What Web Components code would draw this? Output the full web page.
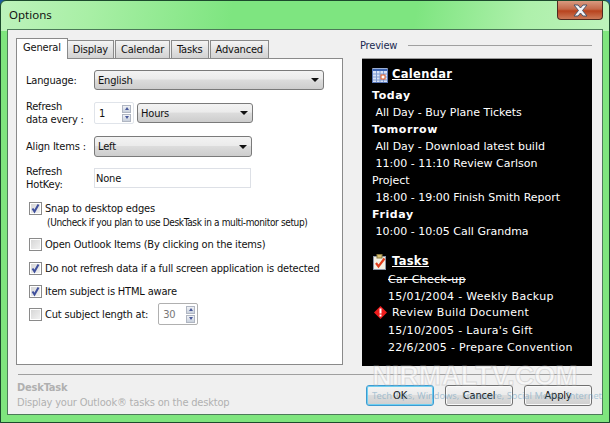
<!doctype html>
<html>
<head>
<title>Options</title>
<style>
html, body { margin: 0; height: 100%; background: #1d5a9c; overflow: hidden; }
body { font: 11px "DejaVu Sans", sans-serif; font-stretch: condensed; letter-spacing: -.18px; }
</style>
</head>
<body>
<options-dialog caption="Options">
  <tab-panel slot="left" tabs="General,Display,Calendar,Tasks,Advanced">
    <form-row label="Language:" style="--row-top:11px; --h:20px">
      <drop-down value="English" style="width:230px"></drop-down>
    </form-row>
    <form-row label="Refresh<br>data every :" style="--row-top:12px; --h:22px">
      <spin-box value="1"></spin-box>
      <drop-down value="Hours" style="width:116px"></drop-down>
    </form-row>
    <form-row label="Align Items :" style="--row-top:12px; --h:21px">
      <drop-down value="Left" style="width:158px;height:21px"></drop-down>
    </form-row>
    <form-row label="Refresh<br>HotKey:" style="--row-top:11px; --h:20px">
      <text-box value="None" style="width:157px"></text-box>
    </form-row>
    <check-box checked style="margin-top:13px">Snap to desktop edges</check-box>
    <div class="note">(Uncheck if you plan to use DeskTask in a multi-monitor setup)</div>
    <check-box style="margin-top:7px">Open Outlook Items (By clicking on the items)</check-box>
    <check-box checked style="margin-top:10px">Do not refresh data if a full screen application is detected</check-box>
    <check-box checked style="margin-top:9px">Item subject is HTML aware</check-box>
    <check-box style="margin-top:5px">Cut subject length at:<spin-box value="30" disabled style="margin-left:10px"></spin-box></check-box>
  </tab-panel>

  <preview-pane slot="right">
    <preview-head icon="calendar" style="margin-bottom:4px">Calendar</preview-head>
    <preview-day>Today</preview-day>
    <preview-item>All Day - Buy Plane Tickets</preview-item>
    <preview-day>Tomorrow</preview-day>
    <preview-item>All Day - Download latest build</preview-item>
    <preview-item>11:00 - 11:10 Review Carlson Project</preview-item>
    <preview-item>18:00 - 19:00 Finish Smith Report</preview-item>
    <preview-day>Friday</preview-day>
    <preview-item>10:00 - 10:05 Call Grandma</preview-item>
    <preview-head icon="tasks" style="margin:13px 0 1px">Tasks</preview-head>
    <preview-task done>Car Check-up</preview-task>
    <preview-task>15/01/2004 - Weekly Backup</preview-task>
    <preview-task urgent style="margin:-1px 0 1px">Review Build Document</preview-task>
    <preview-task>15/10/2005 - Laura's Gift</preview-task>
    <preview-task>22/6/2005 - Prepare Convention</preview-task>
  </preview-pane>

  <push-button slot="buttons" primary>OK</push-button>
  <push-button slot="buttons">Cancel</push-button>
  <push-button slot="buttons">Apply</push-button>
</options-dialog>

<script>
function shadow(el, html) {
  el.attachShadow({ mode: "open" }).innerHTML = html
}

class OptionsDialog extends HTMLElement {
  connectedCallback() {
    shadow(this, `
    <style>
    :host { display: flex; flex-direction: column; height: 423px; box-sizing: border-box; position: relative;
      border: 1px solid #1c4a2c; border-radius: 6px 6px 0 0; padding: 0 6px 7px 6px;
      background: linear-gradient(100deg, #bdf3bb 0, #a8efa5 15%, #7ee580 38%, #7ee580 68%, #aef0ab 86%, #bdf3bb 100%) top/100% 30px no-repeat, #7fe57e; }
    #title { height: 28px; flex: none; display: flex; align-items: center; position: relative; font: 11.500px "Noto Sans", sans-serif; letter-spacing: 0; color: #111; padding: 0 0 2px 2px; box-sizing: border-box; }
    #close { position: absolute; right: 0; top: 0; width: 46px; height: 19px; box-sizing: border-box; display: flex; align-items: center; justify-content: center;
      border: 1px solid #4e2a20; border-top: 0; border-radius: 0 0 4px 4px;
      background: linear-gradient(#d99a80 0, #c4694a 45%, #b8431e 55%, #cc7a58 100%); }
    #client { flex: 1; background: #f0f0f0; border: 1px solid #4c7a58; display: flex; flex-direction: column; min-height: 0; }
    #main { display: flex; height: 335px; flex: none; padding: 8px 10px 0 8px; box-sizing: border-box; }
    #left { width: 327px; flex: none; }
    #right { margin-left: 17px; flex: 1; min-width: 0; }
    #lower { flex: 1; margin: 9px 10px 0 10px; border-top: 1px solid #a0a0a0; display: flex; justify-content: space-between; }
    #about { margin-left: -1px; color: #b0b0b0; line-height: 15px; padding-top: 5px; }
    #about b { display: block; }
    #buttons { display: flex; gap: 11px; padding-top: 10px; }
    #mark { position: absolute; left: 360px; top: 361px; width: 228px; text-align: center; pointer-events: none; color: rgba(255,255,255,.55);
      font: 700 27px/28px "Liberation Sans", sans-serif; letter-spacing: 0; white-space: nowrap; -webkit-text-stroke: 1px rgba(185,185,185,.45); }
    #mark small { display: block; font: 9.300px/10px "Noto Sans", sans-serif; margin: 1px 0 0 11px; color: rgba(110,160,190,.55); -webkit-text-stroke: 0; }
    </style>
    <div id="title">${this.getAttribute("caption")}
      <div id="close"><svg width="17" height="13" viewBox="0 0 17 13"><path d="M2 1h4l2.500 3 2.500-3h4l-4.500 5.500 4.500 5.500h-4l-2.500-3-2.500 3h-4l4.500-5.500z" fill="#f4f6fa" stroke="#4a5468" stroke-width="1"/></svg></div>
    </div>
    <div id="client">
      <div id="main">
        <div id="left"><slot name="left"></slot></div>
        <div id="right"><slot name="right"></slot></div>
      </div>
      <div id="lower">
        <div id="about"><b>DeskTask</b>Display your Outlook® tasks on the desktop</div>
        <div id="buttons"><slot name="buttons"></slot></div>
      </div>
    </div>
    <div id="mark">NIRMALTV.COM<small>Tech Tips, Windows, Freeware, Social Media, Internet</small></div>`)
  }
}

class TabPanel extends HTMLElement {
  connectedCallback() {
    const tabs = this.getAttribute("tabs").split(",")
    const html = tabs.map((t, i) => `<div class="tab ${i == 0 ? "on" : ""}">${t}</div>`).join("")
    shadow(this, `
    <style>
    :host { display: block; }
    #strip { display: flex; height: 20px; align-items: flex-end; position: relative; z-index: 1; }
    .tab { height: 17px; line-height: 18px; padding: 0 5px; border: 1px solid #8a8a8a; border-bottom: 0; margin-left: 1px; color: #111;
      background: linear-gradient(#f4f4f4, #e2e2e2 50%, #d2d2d2); }
    .tab:first-child { margin-left: 0; }
    .on { height: 20px; line-height: 17px; background: #fff; margin-bottom: -1px; padding: 0 6px; }
    .on + .tab { margin-left: 0; border-left: 0; }
    #page { background: #fff; border: 1px solid #8a8a8a; height: 307px; box-sizing: border-box; padding: 0 12px 0 9px; }
    ::slotted(.note) { font-size: 10px; letter-spacing: -.36px; color: #111; margin: 1px 0 0 21px; line-height: 14px; white-space: nowrap; }
    </style>
    <div id="strip">${html}</div>
    <div id="page"><slot></slot></div>`)
  }
}

class FormRow extends HTMLElement {
  connectedCallback() {
    shadow(this, `
    <style>
    :host { display: flex; margin-top: var(--row-top); height: var(--h); align-items: center; color: #111; }
    #label { width: 68px; flex: none; line-height: 13px; white-space: nowrap; }
    #fields { display: flex; gap: 3px; align-items: center; }
    </style>
    <div id="label">${this.getAttribute("label")}</div>
    <div id="fields"><slot></slot></div>`)
  }
}

class DropDown extends HTMLElement {
  connectedCallback() {
    shadow(this, `
    <style>
    :host { display: flex; height: 20px; box-sizing: border-box; align-items: center; justify-content: space-between; padding: 0 4px 0 3px;
      border: 1px solid #7a7a7a; border-radius: 3px; color: #111;
      background: linear-gradient(#f3f3f3, #ebebeb 45%, #dcdcdc 50%, #cdcdcd); }
    i { width: 0; height: 0; border: 4px solid transparent; border-top: 4px solid #111; border-bottom: 0; }
    </style>
    <span>${this.getAttribute("value")}</span><i></i>`)
  }
}

class SpinBox extends HTMLElement {
  connectedCallback() {
    const off = this.hasAttribute("disabled")
    shadow(this, `
    <style>
    :host { display: inline-flex; width: 40px; height: 22px; box-sizing: border-box; align-items: center; justify-content: space-between; padding: 0 2px 0 4px;
      border: 1px solid ${off ? "#b0b0b0" : "#e0e4ea"}; border-radius: 2px; background: #fff; color: ${off ? "#777" : "#111"}; vertical-align: middle; }
    #btns { display: flex; flex-direction: column; gap: 1px; width: 9px; }
    #btns div { height: 8px; background: linear-gradient(#f0f2f6, #c8d0dc); border: 1px solid #b0b6c2; box-sizing: border-box; display: flex; align-items: center; justify-content: center; }
    i { width: 0; height: 0; border: 2.500px solid transparent; }
    .u { border-bottom: 3px solid #4a5a9a; border-top: 0; }
    .d { border-top: 3px solid #4a5a9a; border-bottom: 0; }
    </style>
    <span>${this.getAttribute("value")}</span>
    <div id="btns"><div><i class="u"></i></div><div><i class="d"></i></div></div>`)
  }
}

class TextBox extends HTMLElement {
  connectedCallback() {
    shadow(this, `
    <style>
    :host { display: flex; height: 20px; box-sizing: border-box; align-items: center; padding: 0 1px; border: 1px solid #dde0e6; background: #fff; color: #111; }
    </style>
    ${this.getAttribute("value")}`)
  }
}

class CheckBox extends HTMLElement {
  connectedCallback() {
    const mark = this.hasAttribute("checked")
      ? `<svg width="11" height="11" viewBox="0 0 11 11"><path d="M2.500 5.500l2 3 4-7" fill="none" stroke="#3f4f9c" stroke-width="2"/></svg>` : ""
    shadow(this, `
    <style>
    :host { display: flex; align-items: center; color: #111; min-height: 14px; white-space: nowrap; padding-left: 3px; }
    #box { width: 13px; height: 13px; box-sizing: border-box; border: 1px solid #8a8a8a; margin-right: 3px; flex: none; display: flex; align-items: center; justify-content: center;
      background: linear-gradient(135deg, #d4d4d4, #f4f4f4); box-shadow: inset 0 0 0 1px #fff; }
    </style>
    <div id="box">${mark}</div><slot></slot>`)
  }
}

class PushButton extends HTMLElement {
  connectedCallback() {
    const p = this.hasAttribute("primary")
    shadow(this, `
    <style>
    :host { display: flex; width: 68px; height: 21px; box-sizing: border-box; align-items: center; justify-content: center; border-radius: 3px; color: #111;
      border: 1px solid ${p ? "#3d9ad0" : "#707070"}; box-shadow: inset 0 0 0 1px ${p ? "#6fd0f2" : "#fafafa"};
      background: linear-gradient(#f4f4f4, #ebebeb 45%, #dcdcdc 50%, #cfcfcf); }
    </style>
    <slot></slot>`)
  }
}

class PreviewPane extends HTMLElement {
  connectedCallback() {
    shadow(this, `
    <style>
    :host { display: block; }
    #cap { display: flex; align-items: center; height: 14px; color: #1a2a50; gap: 10px; }
    #cap i { flex: 1; border-top: 1px solid #a0a0a0; margin-left: 1px; }
    #pane { margin: 6px 0 0 2px; height: 308px; box-sizing: border-box; background: #000; border-top: 1px solid #999; padding: 7px 18px 0 10px; overflow: hidden; color: #fff;
      font: 11px/17px "DejaVu Sans", sans-serif; letter-spacing: 0; }
    </style>
    <div id="cap">Preview<i></i></div>
    <div id="pane"><slot></slot></div>`)
  }
}

const icons = {
  calendar: `<svg width="16" height="16" viewBox="0 0 16 16"><rect x="0.500" y="2.500" width="15" height="13" fill="#d8e2f6" stroke="#5a78b8"/><rect x="1" y="1" width="14" height="3" fill="#3a62b0"/><path d="M1 1v1M3 1v1M5 1v1M7 1v1M9 1v1M11 1v1M13 1v1M15 1v1" stroke="#fff"/><path d="M1 7h14M1 10h14M1 13h14M4.500 4v11M8 4v11M11.500 4v11" stroke="#7f9bd2"/><rect x="9" y="8" width="4" height="4" fill="#fff" stroke="#e2561c"/></svg>`,
  tasks: `<svg width="16" height="16" viewBox="0 0 16 16"><rect x="1.500" y="2.500" width="12" height="13" fill="#f4f0e4" stroke="#8a94a8"/><rect x="5" y="0.500" width="5" height="3.500" fill="#d8c070" stroke="#8a7a40"/><path d="M4 9l2.500 3.500 6-8" fill="none" stroke="#e03c1c" stroke-width="2.200"/></svg>`
}

class PreviewHead extends HTMLElement {
  connectedCallback() {
    shadow(this, `
    <style>
    :host { display: flex; align-items: center; font-weight: bold; height: 17px; letter-spacing: .3px; font-size: 11.500px; }
    svg { margin-right: 4px; }
    span { text-decoration: underline; }
    </style>
    ${icons[this.getAttribute("icon")]}<span><slot></slot></span>`)
  }
}

class PreviewDay extends HTMLElement {
  connectedCallback() {
    shadow(this, `
    <style>:host { display: block; font-weight: bold; letter-spacing: .6px; }</style>
    <slot></slot>`)
  }
}

class PreviewItem extends HTMLElement {
  connectedCallback() {
    shadow(this, `
    <style>:host { display: block; text-indent: 3.500px; }</style>
    <slot></slot>`)
  }
}

class PreviewTask extends HTMLElement {
  connectedCallback() {
    const urgent = this.hasAttribute("urgent")
    const flag = urgent ? `<svg width="13" height="13" viewBox="0 0 13 13"><path d="M6.500 0l6.500 6.500-6.500 6.500-6.500-6.500z" fill="#ee1c1c"/><path d="M5.500 2.500h2v5h-2zM5.500 8.500h2v2h-2z" fill="#fff"/></svg>` : ""
    shadow(this, `
    <style>
    :host { display: flex; align-items: center; letter-spacing: .3px; padding-left: ${urgent ? 2 : 16}px; ${this.hasAttribute("done") ? "text-decoration: line-through;" : ""} }
    svg { margin-right: 5px; }
    </style>
    ${flag}<slot></slot>`)
  }
}

customElements.define("options-dialog", OptionsDialog)
customElements.define("tab-panel", TabPanel)
customElements.define("form-row", FormRow)
customElements.define("drop-down", DropDown)
customElements.define("spin-box", SpinBox)
customElements.define("text-box", TextBox)
customElements.define("check-box", CheckBox)
customElements.define("push-button", PushButton)
customElements.define("preview-pane", PreviewPane)
customElements.define("preview-head", PreviewHead)
customElements.define("preview-day", PreviewDay)
customElements.define("preview-item", PreviewItem)
customElements.define("preview-task", PreviewTask)
</script>
</body>
</html>
